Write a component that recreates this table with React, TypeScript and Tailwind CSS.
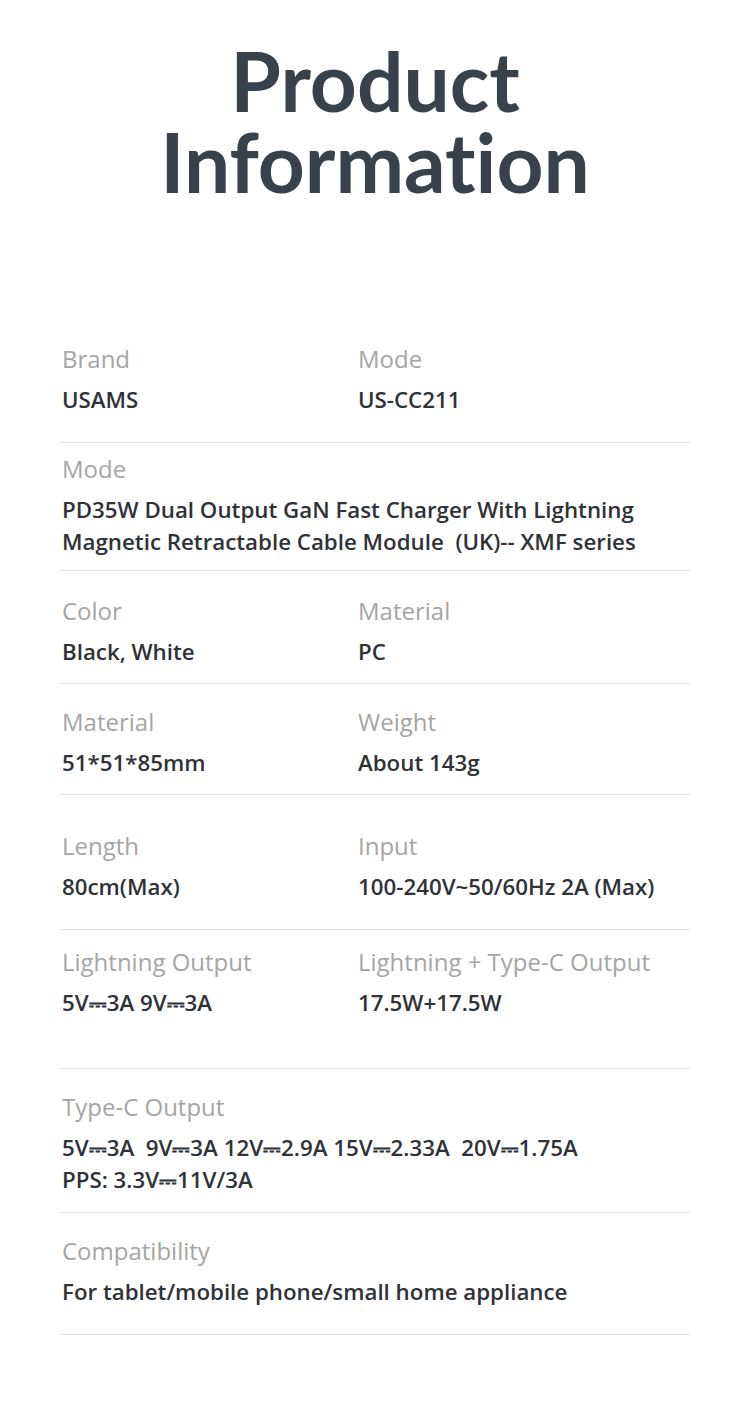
const DC = '\u2393';

type Cell = { label: string; value: string[] };
type Row = { cells: Cell[]; pt: string; h: string };

const rows: Row[] = [
  {
    pt: 'pt-[14px]',
    h: 'h-[113px]',
    cells: [
      { label: 'Brand', value: ['USAMS'] },
      { label: 'Mode', value: ['US-CC211'] },
    ],
  },
  {
    pt: 'pt-[11px]',
    h: 'h-[128px]',
    cells: [
      {
        label: 'Mode',
        value: [
          'PD35W Dual Output GaN Fast Charger With Lightning',
          'Magnetic Retractable Cable Module  (UK)-- XMF series',
        ],
      },
    ],
  },
  {
    pt: 'pt-[25px]',
    h: 'h-[113px]',
    cells: [
      { label: 'Color', value: ['Black, White'] },
      { label: 'Material', value: ['PC'] },
    ],
  },
  {
    pt: 'pt-[23px]',
    h: 'h-[111px]',
    cells: [
      { label: 'Material', value: ['51*51*85mm'] },
      { label: 'Weight', value: ['About 143g'] },
    ],
  },
  {
    pt: 'pt-[36px]',
    h: 'h-[135px]',
    cells: [
      { label: 'Length', value: ['80cm(Max)'] },
      { label: 'Input', value: ['100-240V~50/60Hz 2A (Max)'] },
    ],
  },
  {
    pt: 'pt-[17px]',
    h: 'h-[139px]',
    cells: [
      { label: 'Lightning Output', value: [`5V${DC}3A 9V${DC}3A`] },
      { label: 'Lightning + Type-C Output', value: ['17.5W+17.5W'] },
    ],
  },
  {
    pt: 'pt-[23px]',
    h: 'h-[144px]',
    cells: [
      {
        label: 'Type-C Output',
        value: [
          `5V${DC}3A  9V${DC}3A 12V${DC}2.9A 15V${DC}2.33A  20V${DC}1.75A`,
          `PPS: 3.3V${DC}11V/3A`,
        ],
      },
    ],
  },
  {
    pt: 'pt-[23px]',
    h: 'h-[122px]',
    cells: [{ label: 'Compatibility', value: ['For tablet/mobile phone/small home appliance'] }],
  },
];

function InfoCell({ cell }: { cell: Cell }) {
  return (
    <div className="pl-[2px]">
      <div className="h-[30px] text-[24px] leading-[30px] text-[#a5a5a5] font-normal">{cell.label}</div>
      <div className="mt-[10px] text-[22.3px] leading-[32px] font-semibold text-[#2f3237] whitespace-pre">
        {cell.value.map((v) => (
          <div key={v}>{v}</div>
        ))}
      </div>
    </div>
  );
}

export default function App() {
  return (
    <div className="w-[750px] h-[1401px] bg-white font-['Open_Sans',sans-serif] overflow-hidden">
      <div className="h-[330px] pt-[40px] text-center">
        <h1 className="font-['Lato',sans-serif] text-[82px] leading-[81px] font-bold text-[#39414b] [font-variant-ligatures:none]">
          Product
          <br />
          Information
        </h1>
      </div>

      <div className="mx-[60px]">
        {rows.map((row, i) => (
          <div key={i} className={`${row.h} ${row.pt} border-b border-[#e3e3e3]`}>
            {row.cells.length === 2 ? (
              <div className="grid grid-cols-[296px_1fr]">
                <InfoCell cell={row.cells[0]} />
                <InfoCell cell={row.cells[1]} />
              </div>
            ) : (
              <InfoCell cell={row.cells[0]} />
            )}
          </div>
        ))}
      </div>
    </div>
  );
}
